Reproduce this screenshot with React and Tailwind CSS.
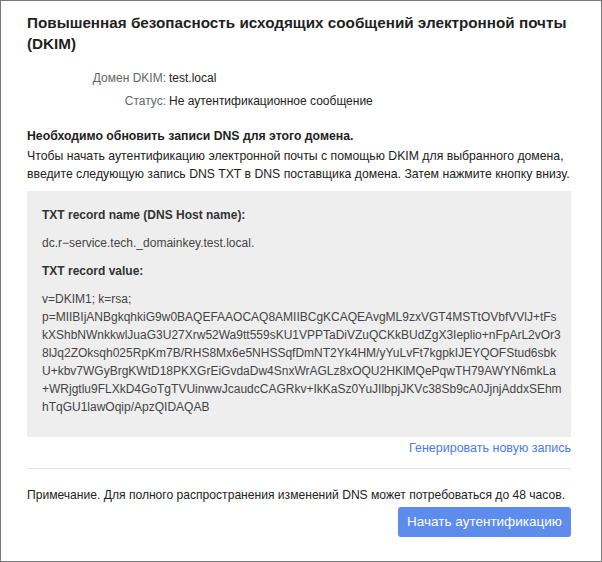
import React from "react"

const recordLines = [
  "v=DKIM1; k=rsa;",
  "p=MIIBIjANBgkqhkiG9w0BAQEFAAOCAQ8AMIIBCgKCAQEAvgML9zxVGT4MSTtOVbfVVlJ+tFs",
  "kXShbNWnkkwlJuaG3U27Xrw52Wa9tt559sKU1VPPTaDiVZuQCKkBUdZgX3Ieplio+nFpArL2vOr3",
  "8lJq2ZOksqh025RpKm7B/RHS8Mx6e5NHSSqfDmNT2Yk4HM/yYuLvFt7kgpkIJEYQOFStud6sbk",
  "U+kbv7WGyBrgKWtD18PKXGrEiGvdaDw4SnxWrAGLz8xOQU2HKlMQePqwTH79AWYN6mkLa",
  "+WRjgtlu9FLXkD4GoTgTVUinwwJcaudcCAGRkv+IkKaSz0YuJIlbpjJKVc38Sb9cA0JjnjAddxSEhm",
  "hTqGU1lawOqip/ApzQIDAQAB",
]

const infoRows = [
  { label: "Домен DKIM:", value: "test.local" },
  { label: "Статус:", value: "Не аутентификационное сообщение" },
]

const App = () => {
  return (
    <div className="w-[602px] h-[562px] bg-white border border-[#7a7a7a] font-['Liberation_Sans',Arial,sans-serif] text-[#222] overflow-hidden">
      <div className="pl-[26px] pr-[30px] pt-[11px]">
        <h1 className="text-[15.25px] leading-[21px] font-bold text-[#1f1f1f]">
          Повышенная безопасность исходящих сообщений электронной почты (DKIM)
        </h1>

        <div className="mt-[15px] flex flex-col gap-[5px] text-[12px] leading-[18px]">
          {infoRows.map((row) => (
            <div key={row.label} className="flex gap-[3px]">
              <span className="w-[139px] text-right text-[#666]">{row.label}</span>
              <span className="text-[#222]">{row.value}</span>
            </div>
          ))}
        </div>

        <div className="mt-[17px] text-[12.25px] leading-[18px]">
          <p className="font-bold mb-[2px]">Необходимо обновить записи DNS для этого домена.</p>
          <p>
            Чтобы начать аутентификацию электронной почты с помощью DKIM для выбранного домена,
            введите следующую запись DNS TXT в DNS поставщика домена. Затем нажмите кнопку внизу.
          </p>
        </div>

        <div className="mt-[8px] bg-[#eeeeee] px-[15px] pt-[15px] pb-[21px] text-[12px] text-[#333]">
          <p className="font-bold leading-[18px]">TXT record name (DNS Host name):</p>
          <p className="mt-[10px] leading-[18px] text-[#444]">dc.r−service.tech._domainkey.test.local.</p>
          <p className="mt-[10px] font-bold leading-[18px]">TXT record value:</p>
          <div className="mt-[10px] leading-[18px] text-[#444]">
            {recordLines.map((line, index) => (
              <div key={index} className="whitespace-nowrap">{line}</div>
            ))}
          </div>
        </div>

        <div className="flex justify-end pt-[2px]">
          <a href="#" className="text-[12.5px] leading-[18px] text-[#4a7be6]">
            Генерировать новую запись
          </a>
        </div>

        <div className="mt-[11px] border-t border-[#e3e3e3]" />

        <p className="mt-[17px] whitespace-nowrap text-[12.1px] leading-[18px] text-[#222]">
          Примечание. Для полного распространения изменений DNS может потребоваться до 48 часов.
        </p>

        <div className="flex justify-end mt-[3px]">
          <button className="w-[173px] h-[30px] rounded-[3px] bg-[#5d8cec] text-white text-[13.5px]">
            Начать аутентификацию
          </button>
        </div>
      </div>
    </div>
  )
}

export default App
